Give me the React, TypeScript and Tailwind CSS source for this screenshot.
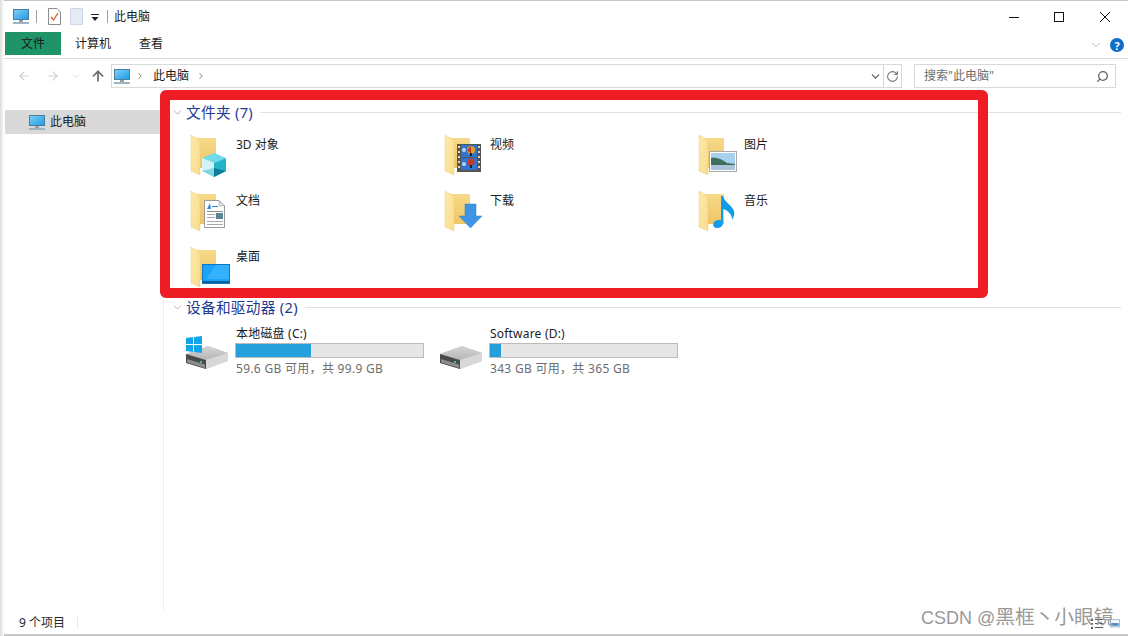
import React from 'react';
import { ArrowLeft, ArrowRight, ArrowUp, ChevronDown, ChevronRight, RotateCw, Search } from 'lucide-react';

const Monitor: React.FC<{ className?: string }> = ({ className }) => (
  <svg viewBox="0 0 16 15" className={className}>
    <defs>
      <linearGradient id="screen" x1="0" y1="0" x2="1" y2="1">
        <stop offset="0" stopColor="#7fd0f7" />
        <stop offset="1" stopColor="#1c9be6" />
      </linearGradient>
    </defs>
    <rect x="0.5" y="0.5" width="15" height="10" fill="url(#screen)" stroke="#4b7f9f" />
    <rect x="6" y="11" width="4" height="2" fill="#8fa0ad" />
    <rect x="0" y="13" width="16" height="2" fill="#9fb4c2" />
  </svg>
);

const Folder: React.FC = () => (
  <>
    <path d="M10 8 L30 8 L30 38 L13 38 Z" fill="url(#folderBack)" />
    <path d="M5 5 L14 10 L14 45 L5 41 Z" fill="url(#folderLeaf)" stroke="#e6c878" strokeWidth="0.4" />
  </>
);

const FolderDefs: React.FC = () => (
  <svg width="0" height="0" className="absolute">
    <defs>
      <linearGradient id="folderBack" x1="0" y1="0" x2="0" y2="1">
        <stop offset="0" stopColor="#f7d98a" />
        <stop offset="1" stopColor="#eec564" />
      </linearGradient>
      <linearGradient id="folderLeaf" x1="0" y1="0" x2="1" y2="1">
        <stop offset="0" stopColor="#fdeaa8" />
        <stop offset="1" stopColor="#f9dc8e" />
      </linearGradient>
      <linearGradient id="driveTop" x1="0" y1="0" x2="0" y2="1">
        <stop offset="0" stopColor="#d6d6d6" />
        <stop offset="1" stopColor="#b4b4b4" />
      </linearGradient>
    </defs>
  </svg>
);

const overlays: Record<string, React.ReactNode> = {
  cube: (
    <>
      <path d="M16 28 L28 23 L40 28 L28 33 Z" fill="#6fdbe6" />
      <path d="M16 28 L28 33 L28 47 L16 41 Z" fill="#d4f3f5" />
      <path d="M40 28 L28 33 L28 47 L40 41 Z" fill="#22b4c9" />
      <path d="M16 41 L28 38 L28 47 Z" fill="#7fd6e0" />
      <path d="M40 41 L28 38 L28 47 Z" fill="#0c7f98" />
    </>
  ),
  video: (
    <>
      <rect x="17" y="14" width="24" height="28" fill="#55554e" />
      <g fill="#d9d9d0">
        <rect x="18" y="16" width="2" height="2" /><rect x="18" y="21" width="2" height="2" />
        <rect x="18" y="26" width="2" height="2" /><rect x="18" y="31" width="2" height="2" />
        <rect x="18" y="36" width="2" height="2" /><rect x="38" y="16" width="2" height="2" />
        <rect x="38" y="21" width="2" height="2" /><rect x="38" y="26" width="2" height="2" />
        <rect x="38" y="31" width="2" height="2" /><rect x="38" y="36" width="2" height="2" />
      </g>
      <rect x="21" y="15" width="16" height="12" fill="#2f74d0" />
      <rect x="21" y="28" width="16" height="12" fill="#2f74d0" />
      <circle cx="31" cy="20" r="4" fill="#d9a520" />
      <path d="M27 20 L31 16 L31 24 Z" fill="#c63a2c" />
      <rect x="30" y="23" width="2" height="3" fill="#222" />
      <circle cx="24" cy="20" r="2" fill="#b8d6ee" />
      <circle cx="31" cy="32" r="3.5" fill="#c63a2c" />
      <rect x="30" y="35" width="2" height="3" fill="#222" />
      <circle cx="24" cy="34" r="2" fill="#b8d6ee" />
    </>
  ),
  picture: (
    <>
      <rect x="15.5" y="21.5" width="27" height="20" fill="#fff" stroke="#a9a9a9" />
      <rect x="17" y="23" width="24" height="17" fill="#a7cfee" />
      <path d="M17 28 C23 27 29 30 33 33 L41 34 L41 36 L17 36 Z" fill="#3f6f5c" />
      <rect x="17" y="35" width="24" height="5" fill="#a9c4da" />
    </>
  ),
  doc: (
    <>
      <path d="M18.5 14.5 L33 14.5 L38.5 20 L38.5 41.5 L18.5 41.5 Z" fill="#fff" stroke="#9a9a9a" />
      <path d="M33 14.5 L33 20 L38.5 20 Z" fill="#e3e3e3" stroke="#9a9a9a" strokeWidth="0.6" />
      <path d="M21 23 L24 17 L25 23 Z" fill="#2f86d8" />
      <rect x="26" y="20" width="6" height="1" fill="#2f86d8" />
      <rect x="21" y="25" width="16" height="1" fill="#8a8a8a" />
      <rect x="21" y="28" width="8" height="1" fill="#a8a8a8" />
      <rect x="21" y="31" width="8" height="1" fill="#a8a8a8" />
      <rect x="30" y="27" width="7" height="6" fill="#5f8296" />
      <rect x="21" y="35" width="16" height="1" fill="#a8a8a8" />
      <rect x="21" y="38" width="16" height="1" fill="#a8a8a8" />
    </>
  ),
  download: (
    <path d="M25 18 L36 18 L36 30 L42 30 L30.5 42 L19 30 L25 30 Z" fill="#3d95e4" stroke="#2f7fca" strokeWidth="0.5" />
  ),
  music: (
    <>
      <ellipse cx="24" cy="38" rx="5" ry="4" fill="#109cea" transform="rotate(-15 24 38)" />
      <path d="M27 10 L29 10 C30 16 38 19 40 25 C41 29 39 32 38 34 C38 29 35 25 29 23 L29 38 L27 38 Z" fill="#109cea" />
    </>
  ),
  desktop: (
    <>
      <rect x="16.5" y="22.5" width="27" height="19" fill="#18a4fb" stroke="#0d78bf" />
      <path d="M30 23 L43 23 L43 37 L20 37 Z" fill="#4cbcff" opacity="0.55" />
      <rect x="17" y="39" width="26" height="2" fill="#0b5f9a" />
    </>
  ),
};

const folders = [
  { name: '3D 对象', art: 'cube' },
  { name: '视频', art: 'video' },
  { name: '图片', art: 'picture' },
  { name: '文档', art: 'doc' },
  { name: '下载', art: 'download' },
  { name: '音乐', art: 'music' },
  { name: '桌面', art: 'desktop' },
];

const drives = [
  { name: '本地磁盘 (C:)', used: 40, free: '59.6 GB 可用，共 99.9 GB', system: true },
  { name: 'Software (D:)', used: 6, free: '343 GB 可用，共 365 GB', system: false },
];

const SectionHeader: React.FC<{ title: string }> = ({ title }) => (
  <div className="flex items-center h-[20px]">
    <ChevronDown className="w-[13px] h-[13px] ml-[7px] text-[#8a8a8a]" strokeWidth={1.2} />
    <span className="ml-[2px] text-[14.67px] leading-[20px] tracking-[0.3px] text-[#1f3a93] whitespace-nowrap">{title}</span>
    <div className="flex-1 h-px bg-[#e2e2e2] ml-[7px] mr-[7px]" />
  </div>
);

const DriveIcon: React.FC<{ system: boolean }> = ({ system }) => (
  <svg viewBox="0 0 42 33" className="w-[42px] h-[33px] shrink-0">
    <path d="M0 18 L22 10 L42 17 L42 25 L20 33 L0 27 Z" fill="#c9c9c9" />
    <path d="M0 18 L20 24 L42 17 L22 10 Z" fill="url(#driveTop)" />
    <path d="M0 18 L20 24 L20 33 L0 27 Z" fill="#4a4a4a" />
    <path d="M20 24 L42 17 L42 25 L20 33 Z" fill="#d8d8d8" />
    <path d="M1 23 L19 28.5 L19 32 L1 26.5 Z" fill="#8d8d8d" />
    <rect x="14" y="25" width="2" height="2" fill="#35d06a" />
    {system && (
      <g fill="#12a5ea">
        <path d="M0 2 L7 1 L7 8 L0 8 Z" />
        <path d="M8 1 L16 0 L16 8 L8 8 Z" />
        <path d="M0 9 L7 9 L7 16 L0 15 Z" />
        <path d="M8 9 L16 9 L16 17 L8 16 Z" />
      </g>
    )}
  </svg>
);

const App: React.FC = () => {
  return (
    <div className="relative w-[1128px] h-[636px] overflow-hidden bg-white flex flex-col text-[12px] text-[#1a1a1a] font-['Noto_Sans','Noto_Sans_CJK_SC',sans-serif]">
      <FolderDefs />

      {/* Title bar */}
      <div className="h-[32px] shrink-0 flex items-center pl-[13px] border-t border-[#c4c4c4]">
        <Monitor className="w-[16px] h-[15px]" />
        <div className="w-px h-[13px] bg-[#a0a0a0] ml-[7px]" />
        <svg viewBox="0 0 13 17" className="w-[13px] h-[17px] ml-[11px]">
          <path d="M0.5 0.5 L9 0.5 L12.5 4 L12.5 16.5 L0.5 16.5 Z" fill="#fff" stroke="#8c8c8c" />
          <path d="M3 9 L5.5 12 L10 5" fill="none" stroke="#e0562a" strokeWidth="1.3" />
        </svg>
        <svg viewBox="0 0 13 17" className="w-[13px] h-[17px] ml-[9px]">
          <path d="M0.5 0.5 L12.5 0.5 L12.5 16.5 L0.5 16.5 Z" fill="#e4ebf7" stroke="#cdd7e8" />
        </svg>
        <svg viewBox="0 0 8 8" className="w-[8px] h-[8px] ml-[8px] mt-[3px]">
          <rect x="0" y="0" width="8" height="1" fill="#222" />
          <path d="M0.5 3 L7.5 3 L4 7 Z" fill="#222" />
        </svg>
        <div className="w-px h-[13px] bg-[#a0a0a0] ml-[8px]" />
        <span className="ml-[6px] leading-none">此电脑</span>
        <div className="ml-auto flex items-center h-full">
          <svg viewBox="0 0 10 10" className="w-[10px] h-[10px] mr-[35px]">
            <rect x="0" y="5" width="10" height="1" fill="#111" />
          </svg>
          <svg viewBox="0 0 10 10" className="w-[10px] h-[10px] mr-[36px]">
            <rect x="0.5" y="0.5" width="9" height="9" fill="none" stroke="#111" />
          </svg>
          <svg viewBox="0 0 10 10" className="w-[10px] h-[10px] mr-[18px]">
            <path d="M0 0 L10 10 M10 0 L0 10" stroke="#111" strokeWidth="1" />
          </svg>
        </div>
      </div>

      {/* Ribbon tabs */}
      <div className="h-[27px] shrink-0 flex items-start pl-[5px] pr-[4px] border-b border-[#dadbdc]">
        <div className="w-[56px] h-[23px] bg-[#1f9469] flex items-center justify-center">文件</div>
        <span className="ml-[14px] mt-[5px] leading-[14px]">计算机</span>
        <span className="ml-[28px] mt-[5px] leading-[14px]">查看</span>
        <div className="ml-auto flex items-center mt-[6px]">
          <ChevronDown className="w-[14px] h-[14px] text-[#9a9a9a] mr-[7px]" strokeWidth={1.2} />
          <div className="w-[14px] h-[14px] rounded-full bg-[#0f6fc6] text-white text-[11px] font-bold flex items-center justify-center leading-none">?</div>
        </div>
      </div>

      {/* Address bar */}
      <div className="h-[33px] shrink-0 flex items-start pt-[5px] pl-[17px] pr-[12px]">
        <ArrowLeft className="w-[14px] h-[14px] mt-[5px] text-[#d0d0d0]" strokeWidth={2} />
        <ArrowRight className="w-[14px] h-[14px] mt-[5px] ml-[15px] text-[#d0d0d0]" strokeWidth={2} />
        <ChevronDown className="w-[10px] h-[10px] mt-[7px] ml-[11px] text-[#d0d0d0]" strokeWidth={2} />
        <ArrowUp className="w-[16px] h-[16px] mt-[4px] ml-[9px] text-[#6a6a6a]" strokeWidth={2.6} />
        <div className="ml-[5px] w-[791px] h-[24px] border border-[#d9d9d9] flex items-center shrink-0">
          <Monitor className="w-[16px] h-[15px] ml-[2px]" />
          <ChevronRight className="w-[10px] h-[10px] ml-[5px] text-[#666]" strokeWidth={2} />
          <span className="ml-[8px] leading-none">此电脑</span>
          <ChevronRight className="w-[10px] h-[10px] ml-[7px] text-[#666]" strokeWidth={2} />
          <ChevronDown className="w-[13px] h-[13px] ml-auto mr-[1px] text-[#555]" strokeWidth={2.2} />
          <div className="w-[18px] h-full border-l border-[#d9d9d9] flex items-center justify-center">
            <RotateCw className="w-[13px] h-[13px] text-[#777]" strokeWidth={2} />
          </div>
        </div>
        <div className="ml-[12px] flex-1 h-[24px] border border-[#d9d9d9] flex items-center pl-[9px] pr-[6px]">
          <span className="text-[#6d6d6d] leading-none">搜索"此电脑"</span>
          <Search className="w-[13px] h-[13px] ml-auto text-[#666] -scale-x-100" strokeWidth={2.4} />
        </div>
      </div>

      {/* Body */}
      <div className="flex-1 flex min-h-0">
        <div className="w-[164px] shrink-0 border-r border-[#efefef] pt-[18px] pl-[5px] pr-[3px]">
          <div className="h-[24px] bg-[#d9d9d9] flex items-center pl-[24px]">
            <Monitor className="w-[16px] h-[15px]" />
            <span className="ml-[5px] leading-none">此电脑</span>
          </div>
        </div>

        <div className="flex-1 pt-[10px]">
          <SectionHeader title="文件夹 (7)" />
          <div className="grid grid-cols-[254px_254px_254px] auto-rows-[56px] pl-[22px] pt-[8px]">
            {folders.map((f) => (
              <div key={f.name} className="flex items-start">
                <svg viewBox="0 0 48 48" className="w-[48px] h-[48px] shrink-0">
                  <Folder />
                  {overlays[f.art]}
                </svg>
                <span className="ml-[2px] mt-[7px] leading-[16px]">{f.name}</span>
              </div>
            ))}
          </div>
          <div className="-mt-px">
            <SectionHeader title="设备和驱动器 (2)" />
          </div>
          <div className="flex pl-[22px] pt-[9px]">
            {drives.map((d) => (
              <div key={d.name} className="w-[254px] flex items-start">
                <div className="pt-[10px]">
                  <DriveIcon system={d.system} />
                </div>
                <div className="ml-[7px] w-[189px]">
                  <div className="pl-px leading-[16px] tracking-[0.2px]">{d.name}</div>
                  <div className="h-[15px] mt-px bg-[#e6e6e6] border border-[#bcbcbc]">
                    <div className="h-full bg-[#26a0da]" style={{ width: `${d.used}%` }} />
                  </div>
                  <div className="pl-px mt-[3px] leading-[16px] tracking-[0.3px] text-[#6d6d6d] whitespace-nowrap">{d.free}</div>
                </div>
              </div>
            ))}
          </div>
        </div>
      </div>

      {/* Status bar */}
      <div className="h-[26px] shrink-0 flex items-center pt-[2px] pl-[19px] pr-[8px] border-b-2 border-[#c8c8c8]">
        <span className="leading-none text-[#2a2a2a]">9 个项目</span>
        <div className="w-px h-[12px] bg-[#e6e6e6] ml-[12px]" />
        <div className="ml-auto flex items-center gap-[4px]">
          <svg viewBox="0 0 14 12" className="w-[18px] h-[12px]">
            <path d="M1 2h2v2H1zM5 2h8v1H5zM1 6h2v2H1zM5 6h8v1H5zM1 10h2v2H1zM5 10h8v1H5z" fill="#555" />
          </svg>
          <svg viewBox="0 0 14 12" className="w-[10px] h-[10px]">
            <rect x="0.5" y="1.5" width="13" height="10" fill="#fff" stroke="#6f9fc6" />
            <rect x="2" y="6" width="10" height="4" fill="#4d90c8" />
          </svg>
        </div>
      </div>

      {/* Left window shadow */}
      <div className="absolute left-0 top-0 bottom-0 w-[4px] bg-gradient-to-r from-[#dcdcdc] to-white" />

      {/* Red annotation frame */}
      <div className="absolute left-[160px] top-[90px] w-[828px] h-[208px] border-[10px] border-[#ee1c25] rounded-[6px]" />

      {/* Watermark */}
      <div className="absolute left-[921px] top-[604px] text-[18px] leading-[26px] text-[#999] whitespace-nowrap font-['Liberation_Sans','Noto_Sans_CJK_SC',sans-serif]">
        CSDN @<span className="text-[19.7px]">黑框丶小眼镜</span>
      </div>
    </div>
  );
};

export default App;
